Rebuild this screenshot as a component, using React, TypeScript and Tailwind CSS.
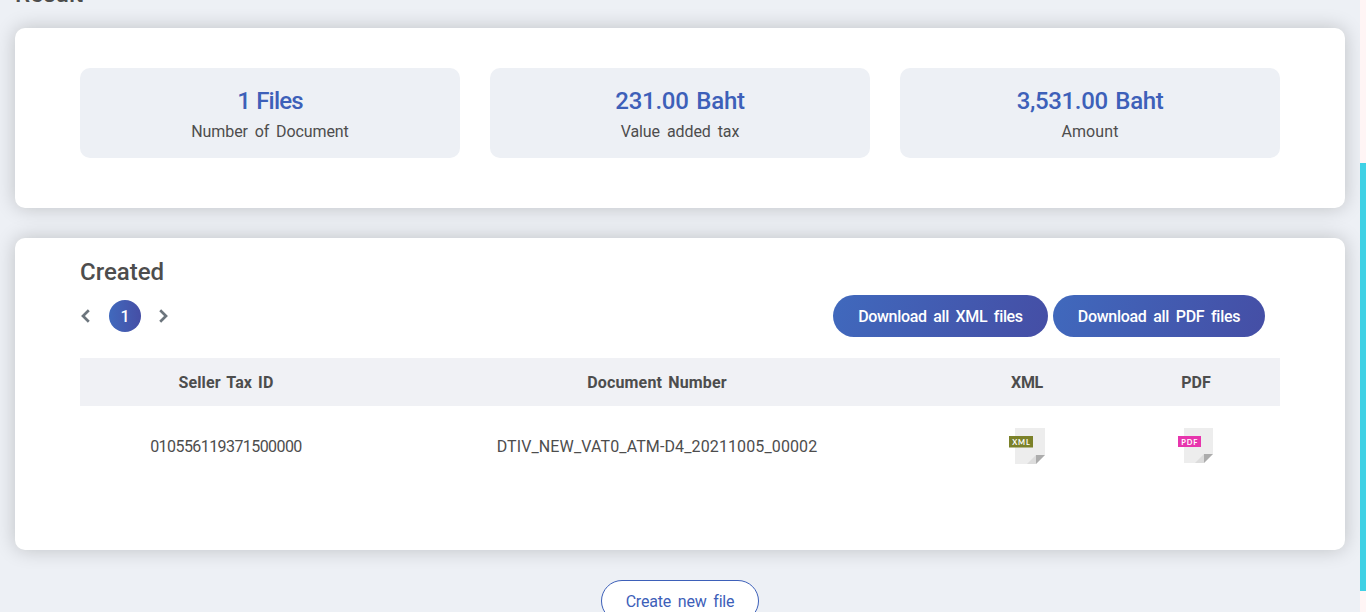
import type { ReactNode } from "react";

const stats = [
  { value: "1 Files", label: "Number of Document", valueClass: "tracking-[-0.8px] [word-spacing:1px]", labelClass: "tracking-[-0.1px] [word-spacing:3px]" },
  { value: "231.00 Baht", label: "Value added tax", valueClass: "tracking-[-0.25px] [word-spacing:2px]", labelClass: "tracking-[-0.07px] [word-spacing:3px]" },
  { value: "3,531.00 Baht", label: "Amount", valueClass: "tracking-[-0.35px] [word-spacing:2px]", labelClass: "tracking-[0.1px]" },
];

function Card({ className, children }: { className: string; children: ReactNode }) {
  return (
    <section className={`rounded-[10px] bg-white px-[65px] shadow-[0_0_20px_rgba(0,0,0,0.2)] ${className}`}>
      {children}
    </section>
  );
}

function Chevron({ d }: { d: string }) {
  return (
    <svg width="12" height="16" viewBox="0 0 12 16" fill="none" stroke="#6c757d" strokeWidth="2.7">
      <path d={d} />
    </svg>
  );
}

function FileIcon({ label, color, height }: { label: string; color: string; height: number }) {
  const w = height === 36 ? 24 : 23;
  const right = height === 36 ? 36 : 35;
  return (
    <svg width="36" height="36" viewBox="0 0 36 36">
      <path d={`M6 0H${right}V${height - 9}L${right - 9} ${height}H6Z`} fill="#ededed" />
      <path d={`M${right - 18} ${height}L${right - 9} ${height - 9}V${height}Z`} fill="#dcdcdc" />
      <path d={`M${right - 9} ${height - 9}H${right}L${right - 9} ${height}Z`} fill="#acacac" />
      <rect x="0" y="8" width={w} height={height === 36 ? 11.5 : 11} fill={color} />
      <text
        x={w / 2 + 0.4}
        y="16.5"
        textAnchor="middle"
        fill="#fff"
        fontFamily="Lato, sans-serif"
        fontWeight="700"
        fontSize="7.4"
        letterSpacing="0.9"
      >
        {label}
      </text>
    </svg>
  );
}

export default function App() {
  return (
    <div className="flex h-[612px] w-full overflow-hidden bg-[#edf0f5] font-['Roboto','Open_Sans',sans-serif] text-[16px] text-[#4d4d4d]">
      <main className="flex min-w-0 flex-1 flex-col px-[15px]">
        <div className="flex h-7 shrink-0 items-start">
          <h2 className="-mt-[18px] h-6 text-[24px] leading-6 font-medium tracking-[0.1px]">Result</h2>
        </div>

        <Card className="h-[180px] shrink-0 pt-10">
          <div className="grid grid-cols-3 gap-[30px]">
            {stats.map((s) => (
              <div key={s.label} className="flex h-[90px] flex-col items-center rounded-[10px] bg-[#edf0f5] pt-[15px] whitespace-nowrap">
                <div className={`text-[24px] leading-9 font-medium text-[#3d60b9] ${s.valueClass}`}>{s.value}</div>
                <div className={`pt-px leading-6 ${s.labelClass}`}>{s.label}</div>
              </div>
            ))}
          </div>
        </Card>

        <Card className="mt-[30px] h-[312px] shrink-0 pt-5">
          <h2 className="text-[24px] leading-[29px] font-medium">Created</h2>
          <div className="mt-2 flex h-[42px] items-center justify-between pr-[15px]">
            <nav className="flex items-center">
              <button className="flex w-[29px]"><Chevron d="M8.8 2.3L3 8L8.8 13.7" /></button>
              <span className="flex size-8 items-center justify-center rounded-full bg-linear-to-r from-[#4069bd] to-[#454ea5] pt-px font-medium text-white">1</span>
              <button className="ml-4 flex"><Chevron d="M3.2 2.3L9 8L3.2 13.7" /></button>
            </nav>
            <div className="flex gap-[5px] whitespace-nowrap font-medium text-white">
              <button className="flex h-[42px] w-[215px] items-center justify-center rounded-full bg-linear-[110deg] from-[#4069bd] to-[#454ea5] pt-0.5">
                <span className="tracking-[-0.35px] [word-spacing:3px]">Download all XML files</span>
              </button>
              <button className="flex h-[42px] w-[212px] items-center justify-center rounded-full bg-linear-[110deg] from-[#4069bd] to-[#454ea5] pt-0.5">
                <span className="tracking-[-0.3px] [word-spacing:3px]">Download all PDF files</span>
              </button>
            </div>
          </div>
          <table className="mt-[21px] w-full table-fixed border-collapse text-center whitespace-nowrap">
            <colgroup>
              <col className="w-[292px]" />
              <col className="w-[570px]" />
              <col className="w-[170px]" />
              <col className="w-[168px]" />
            </colgroup>
            <thead>
              <tr className="h-12 bg-[#f0f1f5]">
                <th className="p-0 pt-0.5 font-bold tracking-[0.1px] [word-spacing:2px]">Seller Tax ID</th>
                <th className="p-0 pt-0.5 font-bold tracking-[0.15px] [word-spacing:2px]">Document Number</th>
                <th className="p-0 pt-0.5 font-bold tracking-[-0.3px]">XML</th>
                <th className="p-0 pt-0.5 font-bold">PDF</th>
              </tr>
            </thead>
            <tbody>
              <tr className="h-[80px]">
                <td className="p-0 pt-0.5"><span className="tracking-[-0.57px]">010556119371500000</span></td>
                <td className="p-0 pt-0.5"><span className="tracking-[0.12px]">DTIV_NEW_VAT0_ATM-D4_20211005_00002</span></td>
                <td className="p-0"><span className="flex justify-center"><FileIcon label="XML" color="#7b8129" height={36} /></span></td>
                <td className="p-0"><span className="flex justify-center"><FileIcon label="PDF" color="#e735ad" height={35} /></span></td>
              </tr>
            </tbody>
          </table>
        </Card>

        <div className="mt-[30px] flex shrink-0 justify-center">
          <button className="flex h-[42px] w-[158px] items-center justify-center rounded-full border border-[#3d60b9] bg-white pt-0.5 whitespace-nowrap text-[#3d60b9]">
            <span className="tracking-[-0.2px] [word-spacing:3px]">Create new file</span>
          </button>
        </div>
      </main>
      <aside className="flex w-1.5 shrink-0 flex-col bg-[#fff5f5] pt-[163px]">
        <div className="h-[428px] bg-[#40d1e5]" />
      </aside>
    </div>
  );
}
